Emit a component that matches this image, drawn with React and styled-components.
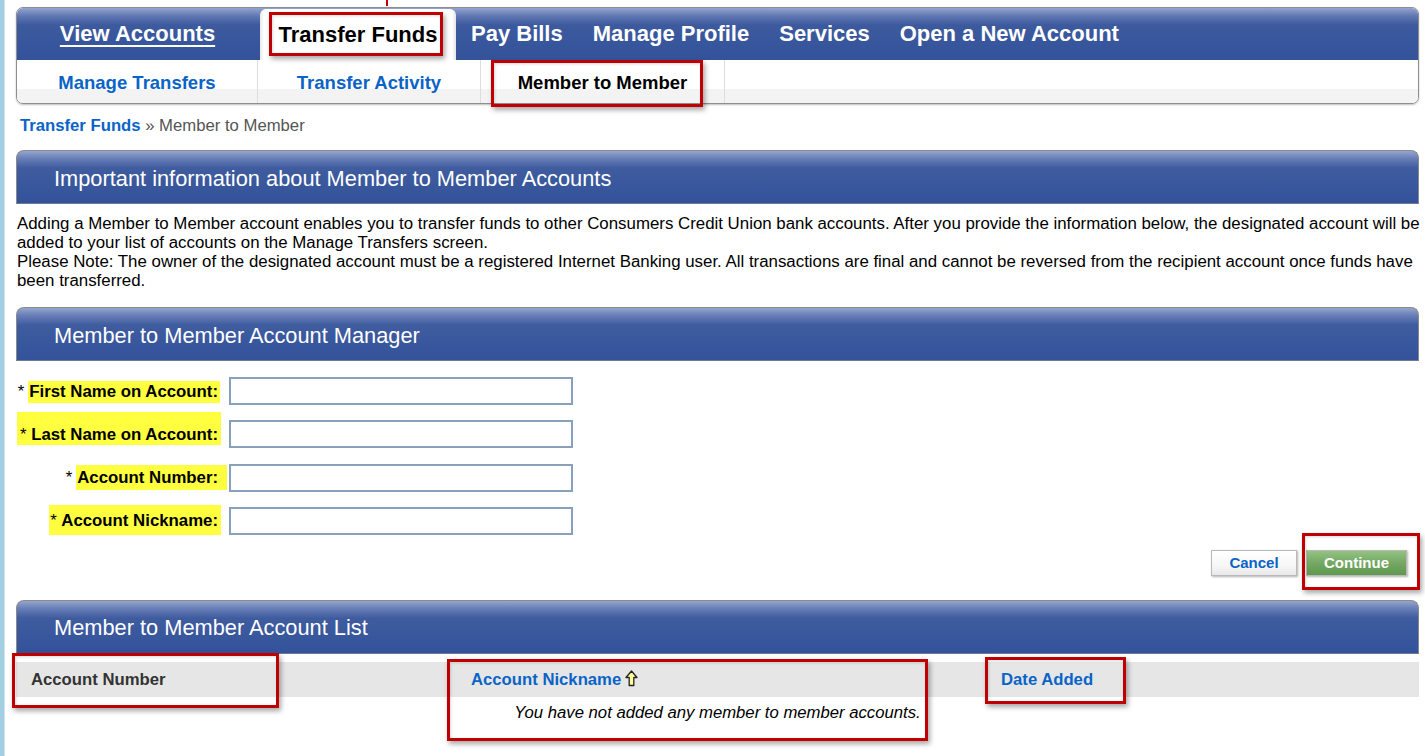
import React from 'react';
import styled, { createGlobalStyle, css } from 'styled-components';

const GlobalStyle = createGlobalStyle`
  html, body { margin: 0; padding: 0; background: #fff; }
  body { font-family: "Liberation Sans", Arial, sans-serif; color: #000; }
  * { box-sizing: border-box; }
`;

const Page = styled.div`
  position: relative;
  min-height: 756px;
  padding: 7px 6px 0 16px;
  overflow: hidden;
  &::before {
    content: '';
    position: absolute;
    left: 0; top: 0; bottom: 0;
    width: 4px;
    background: #a3cfe3;
    border-right: 1px solid #c9e3ef;
  }
`;

/* ---------- top navigation ---------- */
const NavBox = styled.nav`
  border: 1px solid #8e8e8e;
  border-radius: 7px;
  overflow: hidden;
  box-shadow: 0 1px 2px rgba(0,0,0,.25);
`;

const MainBar = styled.div`
  display: flex;
  align-items: flex-end;
  height: 52px;
  background: linear-gradient(#93a4ce 0, #6077b3 8px, #3d5a9e 17px, #33529a 100%);
`;

const MainItem = styled.a`
  display: flex;
  align-items: center;
  justify-content: center;
  height: 100%;
  padding: 0 15px;
  color: #fff;
  font-weight: bold;
  font-size: 22px;
  text-decoration: none;
  white-space: nowrap;
  ${p => p.$width && css`width: ${p.$width}px; padding: 0;`}
  ${p => p.$underline && css`
    text-decoration: underline;
    text-underline-offset: 4px;
    text-decoration-thickness: 2px;
  `}
  ${p => p.$active && css`
    margin-left: 2px;
    height: 51px;
    padding-top: 1px;
    background: linear-gradient(to right, #e9e9e9 0, #fff 4px, #fff calc(100% - 4px), #e4e4e4 100%);
    color: #000;
    border-radius: 6px 6px 0 0;
  `}
`;

const SubBar = styled.div`
  display: flex;
  height: 43px;
  background: linear-gradient(#fff 0, #fff 29px, #f3f3f3 29px, #f3f3f3 100%);
`;

const SubItem = styled.a`
  width: ${p => p.$w}px;
  display: flex;
  align-items: center;
  justify-content: center;
  border-right: 1px solid #dddddd;
  font-weight: bold;
  font-size: 18.5px;
  padding-top: 3px;
  color: ${p => (p.$active ? '#000' : '#0a64c8')};
  white-space: nowrap;
`;

/* ---------- breadcrumb ---------- */
const Crumbs = styled.div`
  margin: 12px 0 0 4px;
  font-size: 16.7px;
  line-height: 19px;
  color: #555;
`;

const CrumbLink = styled.a`
  color: #0a64c8;
  font-weight: bold;
`;

/* ---------- sections ---------- */
const SectionHeader = styled.h2`
  margin: ${p => p.$mt}px 0 0 0;
  height: 54px;
  display: flex;
  align-items: center;
  padding: 3px 0 0 37px;
  border: 1px solid #8a8a8a;
  border-bottom-color: #6c7a96;
  border-radius: 8px 8px 0 0;
  background: linear-gradient(#95a6cf 0, #6a80b8 7px, #3f5c9f 17px, #33529a 100%);
  color: #fff;
  font-size: 21.8px;
  font-weight: normal;
  white-space: nowrap;
`;

const Info = styled.p`
  margin: 10px -6px 0 1px;
  font-size: 16.85px;
  line-height: 19px;
`;

/* ---------- form ---------- */
const Form = styled.div`
  margin-top: 16px;
  display: grid;
  grid-template-columns: 210px 344px;
  grid-auto-rows: 28px;
  column-gap: 2px;
  row-gap: 15.3px;
  padding-left: 1px;
`;

const Label = styled.label`
  height: 28px;
  display: flex;
  justify-content: flex-end;
  align-items: center;
  padding-right: ${p => p.$pr}px;
  font-size: 16.8px;
  line-height: 19px;
  font-weight: bold;
  white-space: nowrap;
`;

const Star = styled.span`
  font-weight: normal;
  margin-right: 4px;
`;

const Mark = styled.span`
  display: inline-block;
  background: #ffff40;
  padding: ${p => `${p.$pt}px ${p.$pr}px ${p.$pb}px ${p.$pl}px`};
  margin: ${p => `-${p.$pt}px 0 -${p.$pb}px 0`};
  line-height: 19px;
`;

const InlineStar = styled.span`
  font-weight: normal;
`;

const Field = styled.input`
  width: 344px;
  height: 28px;
  border: 2px solid #87a0bb;
  background: #fff;
  outline: none;
`;

const Actions = styled.div`
  margin-top: 15px;
  display: flex;
  justify-content: flex-end;
  gap: 9px;
  padding-right: 12px;
`;

const Button = styled.button`
  height: 26px;
  width: ${p => p.$w}px;
  font-family: inherit;
  font-size: 15px;
  font-weight: bold;
  border: 1px solid #b9b9b9;
  box-shadow: 1px 1px 2px rgba(0,0,0,.3);
  cursor: pointer;
  ${p => p.$primary
    ? css`
      color: #fff;
      background: linear-gradient(#93c283 0, #74a863 50%, #5f984f 100%);
    `
    : css`
      color: #0a64c8;
      background: linear-gradient(#ffffff 0, #f7f7f7 60%, #e9e9e9 100%);
    `}
`;

/* ---------- list table ---------- */
const Table = styled.table`
  margin-top: 8px;
  width: 100%;
  border-collapse: collapse;
  table-layout: fixed;
  font-size: 16.7px;
`;

const Th = styled.th`
  height: 35px;
  background: #e6e6e6;
  text-align: left;
  font-weight: bold;
  padding: 1px 0 0 ${p => p.$pl}px;
  color: ${p => (p.$link ? '#0a64c8' : '#333')};
  white-space: nowrap;
`;

const Empty = styled.td`
  height: 32px;
  text-align: center;
  font-style: italic;
  padding-top: 1px;
`;

const SortIcon = styled.svg`
  vertical-align: -2px;
  margin-left: 4px;
`;

/* ---------- red annotation callouts (overlay) ---------- */
const Callout = styled.div`
  position: absolute;
  left: ${p => p.$x}px;
  top: ${p => p.$y}px;
  width: ${p => p.$w}px;
  height: ${p => p.$h}px;
  border: 3px solid #c00000;
  box-shadow: 2px 3px 5px rgba(0,0,0,.35), inset 1px 1px 3px rgba(0,0,0,.15);
  pointer-events: none;
`;

const Pointer = styled.div`
  position: absolute;
  left: 386px;
  top: 0;
  width: 2px;
  height: 6px;
  background: #c00000;
`;

const callouts = [
  { x: 269, y: 12, w: 174, h: 44 },
  { x: 491, y: 60, w: 212, h: 47 },
  { x: 1302, y: 533, w: 118, h: 57 },
  { x: 12, y: 653, w: 267, h: 55 },
  { x: 447, y: 659, w: 481, h: 82 },
  { x: 985, y: 657, w: 141, h: 47 },
];

export default function App() {
  return (
    <>
      <GlobalStyle />
      <Page>
        <NavBox>
          <MainBar>
            <MainItem $width={241} $underline>View Accounts</MainItem>
            <MainItem $width={196} $active>Transfer Funds</MainItem>
            <MainItem>Pay Bills</MainItem>
            <MainItem>Manage Profile</MainItem>
            <MainItem>Services</MainItem>
            <MainItem>Open a New Account</MainItem>
          </MainBar>
          <SubBar>
            <SubItem $w={241}>Manage Transfers</SubItem>
            <SubItem $w={223}>Transfer Activity</SubItem>
            <SubItem $w={244} $active>Member to Member</SubItem>
          </SubBar>
        </NavBox>

        <Crumbs>
          <CrumbLink>Transfer Funds</CrumbLink> » Member to Member
        </Crumbs>

        <SectionHeader $mt={15}>Important information about Member to Member Accounts</SectionHeader>
        <Info>
          Adding a Member to Member account enables you to transfer funds to other Consumers Credit Union bank accounts. After you provide the information below, the designated account will be added to your list of accounts on the Manage Transfers screen.
          <br />
          Please Note: The owner of the designated account must be a registered Internet Banking user. All transactions are final and cannot be reversed from the recipient account once funds have been transferred.
        </Info>

        <SectionHeader $mt={17}>Member to Member Account Manager</SectionHeader>
        <Form>
          <Label $pr={7}>
            <Star>*</Star>
            <Mark $pt={0.5} $pb={2.5} $pl={1} $pr={2}>First Name on Account:</Mark>
          </Label>
          <Field />
          <Label $pr={6}>
            <Mark $pt={12.5} $pb={1.5} $pl={3} $pr={3}>
              <InlineStar>* </InlineStar>Last Name on Account:
            </Mark>
          </Label>
          <Field />
          <Label $pr={0}>
            <Star>*</Star>
            <Mark $pt={3.5} $pb={2.5} $pl={1} $pr={9}>Account Number:</Mark>
          </Label>
          <Field />
          <Label $pr={6}>
            <Mark $pt={6.5} $pb={4.5} $pl={1} $pr={3}>
              <InlineStar>* </InlineStar>Account Nickname:
            </Mark>
          </Label>
          <Field />
        </Form>

        <Actions>
          <Button $w={86}>Cancel</Button>
          <Button $w={101} $primary>Continue</Button>
        </Actions>

        <SectionHeader $mt={24}>Member to Member Account List</SectionHeader>
        <Table>
          <colgroup>
            <col style={{ width: 439 }} />
            <col style={{ width: 530 }} />
            <col />
          </colgroup>
          <thead>
            <tr>
              <Th $pl={15}>Account Number</Th>
              <Th $pl={16} $link>
                Account Nickname
                <SortIcon width="13" height="17" viewBox="0 0 13 17">
                  <path d="M6.5 1 L12 7.5 L8.8 7.5 L8.8 15.5 L4.2 15.5 L4.2 7.5 L1 7.5 Z" fill="#ffff9a" stroke="#222" strokeWidth="1.3" strokeLinejoin="round" />
                </SortIcon>
              </Th>
              <Th $pl={16} $link>Date Added</Th>
            </tr>
          </thead>
          <tbody>
            <tr>
              <Empty colSpan={3}>You have not added any member to member accounts.</Empty>
            </tr>
          </tbody>
        </Table>

        <Pointer />
        {callouts.map((c, i) => (
          <Callout key={i} $x={c.x} $y={c.y} $w={c.w} $h={c.h} />
        ))}
      </Page>
    </>
  );
}
